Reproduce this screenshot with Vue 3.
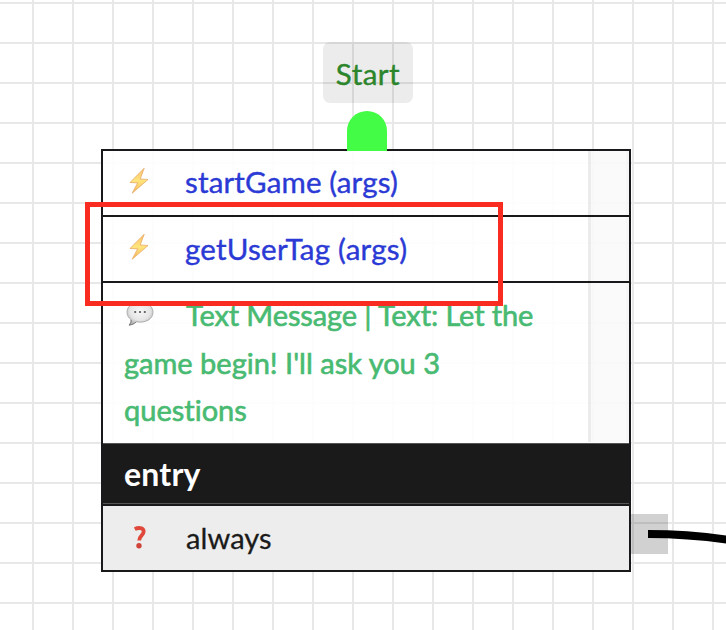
<script setup>
const actions = [
  { id: 'start', label: 'startGame (args)' },
  { id: 'tag', label: 'getUserTag (args)' },
]
</script>

<template>
  <main class="canvas">
    <div class="start-label">Start</div>

    <section class="node">
      <div v-for="action in actions" :key="action.id" class="row action" :class="action.id">
        <svg class="icon bolt" viewBox="0 0 22 28">
          <defs>
            <linearGradient :id="'bolt-' + action.id" x1="0" y1="0" x2="0" y2="1">
              <stop offset="0" stop-color="#f8c06c" />
              <stop offset=".5" stop-color="#ffe57c" />
              <stop offset="1" stop-color="#f5b65c" />
            </linearGradient>
          </defs>
          <path d="M16.2 1.2 2 15.500 9.600 15.900 4.200 26.200 20 12.500 12.200 12Z" :fill="`url(#bolt-${action.id})`" stroke="#e8ab68" stroke-width=".8" stroke-linejoin="round" />
        </svg>
        <span class="label">{{ action.label }}</span>
      </div>
      <div class="row message">
        <svg class="icon bubble" viewBox="0 0 28 26">
          <defs>
            <radialGradient id="bubble-fill" cx=".5" cy=".4" r=".6">
              <stop offset="0" stop-color="#f7f7f7" />
              <stop offset=".65" stop-color="#e5e5e5" />
              <stop offset="1" stop-color="#b4b4b4" />
            </radialGradient>
          </defs>
          <path d="M14 1C6.7 1 1 5.3 1 11.2c0 3.4 1.8 5.8 4.1 7.5.2 2-.5 3.6-2.1 5.4 3.1-.3 5.4-1.5 7.3-3.3 9 1.7 16.7-2.6 16.7-9.6C27 5.300 21.300 1 14 1Z" fill="url(#bubble-fill)" stroke="#a2a2a2" stroke-width=".8" />
          <path d="M5.100 18.800c.2 2-.5 3.600-2.100 5.300 3.100-.3 5.400-1.500 7.300-3.300" fill="none" stroke="#777" stroke-width=".9" />
          <g fill="#555"><circle cx="9.200" cy="11" r="1.100" /><circle cx="14" cy="11" r="1.100" /><circle cx="18.800" cy="11" r="1.100" /></g>
        </svg>
        <p><span class="first">Text Message | Text: Let the</span><br />game begin! I'll ask you 3<br />questions</p>
      </div>
      <header class="row entry">entry</header>
      <div class="row always">
        <svg class="icon question" viewBox="0 0 14 24">
          <path d="M1.800 4.100C4.800 2.500 10.700 2.200 10.700 6.600c0 3.900-4.500 3.800-4.500 9" fill="none" stroke="#df483b" stroke-width="3.800" />
          <circle cx="6" cy="20.800" r="2.700" fill="#cf4339" />
        </svg>
        <span class="label">always</span>
      </div>
      <div class="gutter"></div>
    </section>

    <div class="inlet"></div>
    <div class="port"></div>
    <svg class="edge" viewBox="0 0 78 30"><path d="M0 10C28 10 54 12 80 15.800" /></svg>
    <div class="highlight"></div>
  </main>
</template>

<style>
body {
  margin: 0;
  overflow: hidden;
}
</style>

<style scoped>
.canvas {
  position: relative;
  width: 726px;
  height: 630px;
  overflow: hidden;
  background-color: #fff;
  background-image:
    linear-gradient(90deg, #e8e8e8 2px, transparent 2px),
    linear-gradient(#e8e8e8 2px, transparent 2px);
  background-size: 40px 40px;
  background-position: 32px 2px;
  font-family: Lato, sans-serif;
  font-size: 29px;
  font-variant-ligatures: none;
}
.start-label {
  position: absolute;
  left: 323px;
  top: 42px;
  width: 90px;
  height: 61px;
  border-radius: 7px;
  background: rgba(0, 0, 0, .075);
  color: #2b852b;
  font-size: 29.5px;
  letter-spacing: .5px;
  line-height: 63px;
  text-align: center;
  -webkit-text-stroke: .4px #2b852b;
}
.node {
  position: absolute;
  left: 101px;
  top: 149px;
  box-sizing: border-box;
  width: 530px;
  height: 423px;
  border: 2px solid #19191b;
  background: rgba(255, 255, 255, .9);
}
.row {
  position: relative;
  box-sizing: border-box;
  padding-left: 21px;
  white-space: nowrap;
}
.action {
  display: flex;
  align-items: center;
  height: 66px;
  border-bottom: 2px solid #19191b;
  color: #2b3ad5;
  font-size: 29.5px;
  letter-spacing: .15px;
  -webkit-text-stroke: .4px #2b3ad5;
}
.action .label {
  margin-left: -1px;
  padding-bottom: 4px;
}
.tag .label {
  padding-bottom: 2px;
  letter-spacing: .27px;
}
.icon {
  flex: none;
}
.bolt {
  width: 22px;
  height: 28px;
  margin-left: 4px;
  margin-right: 36px;
  margin-bottom: 5px;
}
.tag .bolt {
  margin-bottom: 4px;
}
.message {
  height: 160px;
  padding-top: 8px;
  color: #48ba72;
  line-height: 47.5px;
  -webkit-text-stroke: .6px #48ba72;
}
.message p {
  margin: 0;
}
.first {
  padding-left: 62px;
  letter-spacing: -.12px;
}
.bubble {
  position: absolute;
  left: 23px;
  top: 18px;
  width: 28px;
  height: 26px;
}
.entry {
  height: 63px;
  border-top: 1px solid #555;
  border-bottom: 2px solid #19191b;
  background: #1a1a1a;
  box-shadow: inset 0 -1px #555;
  color: #fff;
  font-size: 32px;
  font-weight: 700;
  letter-spacing: .2px;
  line-height: 59px;
}
.always {
  display: flex;
  align-items: center;
  height: 64px;
  background: rgba(236, 236, 236, .92);
  color: #1a1a1a;
  letter-spacing: .1px;
  -webkit-text-stroke: .3px #1a1a1a;
}
.always .label {
  padding-bottom: 2px;
}
.question {
  width: 14px;
  height: 24px;
  margin-left: 9px;
  margin-right: 39px;
  margin-bottom: 2px;
}
.gutter {
  position: absolute;
  right: 0;
  top: 0;
  box-sizing: border-box;
  width: 41px;
  height: 291px;
  border-left: 3px solid rgba(0, 0, 0, .07);
  border-right: 3px solid rgba(0, 0, 0, .035);
  background: rgba(0, 0, 0, .018);
  background-clip: padding-box;
}
.inlet {
  position: absolute;
  left: 347px;
  top: 111px;
  width: 40px;
  height: 40px;
  border-radius: 20px 20px 0 0;
  background: #43fc45;
}
.port {
  position: absolute;
  left: 631px;
  top: 514px;
  width: 37px;
  height: 40px;
  background: rgba(0, 0, 0, .18);
}
.edge {
  position: absolute;
  left: 648px;
  top: 524px;
  width: 78px;
  height: 30px;
}
.edge path {
  fill: none;
  stroke: #000;
  stroke-width: 8px;
}
.highlight {
  position: absolute;
  left: 85px;
  top: 202px;
  box-sizing: border-box;
  width: 418px;
  height: 104px;
  border: 5px solid #fa2b20;
}
</style>
